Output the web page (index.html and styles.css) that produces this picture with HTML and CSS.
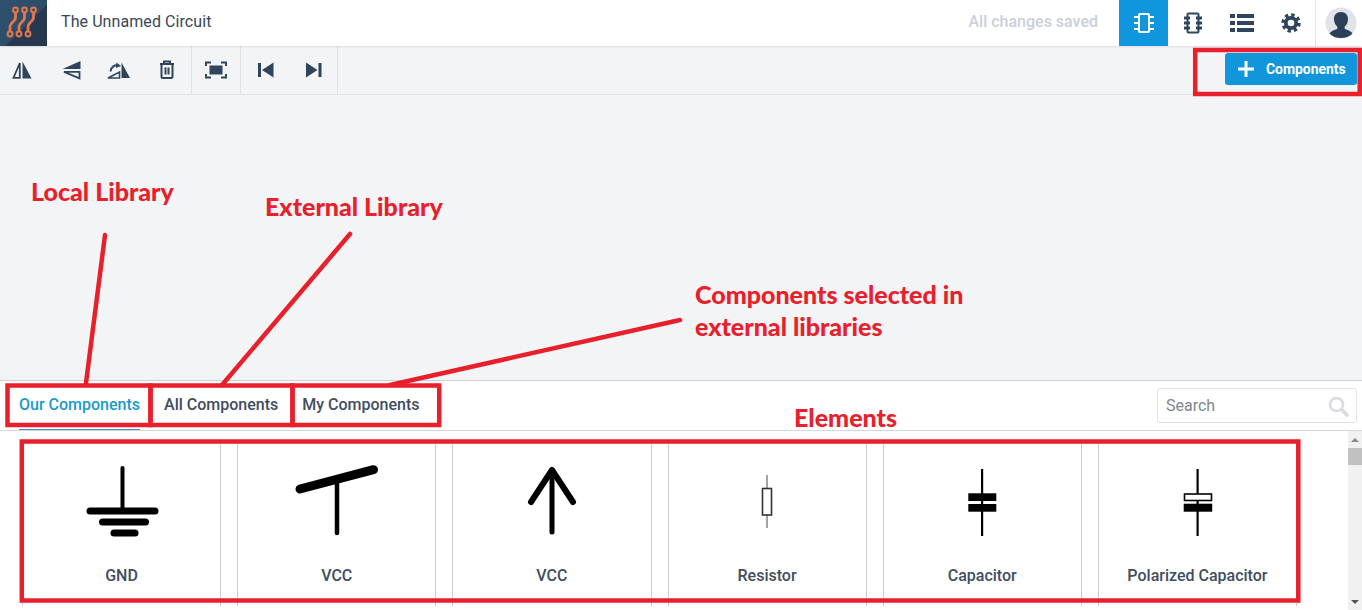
FILE: index.html
```html
<!DOCTYPE html>
<html lang="en">
<head>
<meta charset="utf-8">
<title>The Unnamed Circuit</title>
<link rel="stylesheet" href="styles.css">
</head>
<body>
<div class="app">
  <header class="topbar">
    <div class="logo">
      <svg width="47" height="46" viewBox="0 0 47 46" fill="none">
        <g class="trace">
          <path d="M15.500 12v5.500q0 1.500-1 2.700l-3.500 4q-1 1.200-1 2.800v4"/><path d="M24.500 12v5.500q0 1.500-1 2.700l-3.500 4q-1 1.200-1 2.800v4"/><path d="M33.500 12v5.500q0 1.500-1 2.700l-3.500 4q-1 1.200-1 2.800v4"/>
          <circle cx="15.500" cy="10" r="2.400"/><circle cx="24.500" cy="10" r="2.400"/><circle cx="33.500" cy="10" r="2.400"/>
          <circle cx="10" cy="34" r="2.400"/><circle cx="19" cy="34" r="2.400"/><circle cx="28" cy="34" r="2.400"/>
        </g>
      </svg>
    </div>
    <div class="title">The Unnamed Circuit</div>
    <div class="saved">All changes saved</div>
    <div class="tile active">
      <svg width="22" height="24" viewBox="0 0 22 24" fill="none" stroke="#fff" stroke-width="2">
        <rect x="6" y="3" width="10" height="18" rx="1"/>
        <path d="M1 6h5M1 12h5M1 18h5M16 6h5M16 12h5M16 18h5"/>
      </svg>
    </div>
    <div class="tile">
      <svg width="22" height="24" viewBox="0 0 22 24" fill="none" stroke="#2f455c" stroke-width="2">
        <rect x="5.500" y="2.500" width="11" height="19" rx="1"/>
        <path d="M2 7h6M2 12h6M2 17h6M14 7h6M14 12h6M14 17h6" stroke-width="3"/>
      </svg>
    </div>
    <div class="tile">
      <svg width="24" height="20" viewBox="0 0 24 20" fill="#2f455c">
        <rect x="0" y="1" width="5" height="4"/><rect x="7" y="1" width="17" height="4"/>
        <rect x="0" y="8" width="5" height="4"/><rect x="7" y="8" width="17" height="4"/>
        <rect x="0" y="15" width="5" height="4"/><rect x="7" y="15" width="17" height="4"/>
      </svg>
    </div>
    <div class="tile">
      <svg width="20" height="20" viewBox="0 0 20 20" fill="none" stroke="#2f455c">
        <circle cx="10" cy="10" r="5.200" stroke-width="3.800"/>
        <circle cx="10" cy="10" r="8" stroke-width="3.400" stroke-dasharray="3.300 2.980"/>
      </svg>
    </div>
    <div class="account">
      <svg width="32" height="32" viewBox="0 0 32 32">
        <circle cx="16" cy="16" r="15.500" fill="#e1e3e8"/>
        <path d="M16 5c-4.500 0-7 3-7 7 0 3.200 1.300 6 3.300 7.500v2.500c-3 1.200-6.500 2-7.800 4.500 2.800 3 6.900 4.500 11.500 4.500s8.700-1.500 11.500-4.500c-1.300-2.500-4.800-3.300-7.800-4.500v-2.500c2-1.500 3.300-4.300 3.300-7.500 0-4-2.500-7-7-7z" fill="#2b3f59"/>
      </svg>
    </div>
  </header>

  <div class="toolbar">
    <div class="tool-group group-edit">
      <button class="tool">
        <svg width="24" height="24" viewBox="0 0 24 24" fill="#2f455c"><path d="M1.500 19.800 7.800 5v14.800z" fill="none" stroke="#2f455c" stroke-width="1.800"/><path d="M10.500 3.500 19.500 20.500h-9z"/></svg>
      </button>
      <button class="tool">
        <svg width="24" height="24" viewBox="0 0 24 24" fill="#2f455c"><path d="M2.500 11 20.500 3v8z"/><path d="M4 13.800H19.500v6.500z" fill="none" stroke="#2f455c" stroke-width="1.800"/></svg>
      </button>
      <button class="tool">
        <svg width="24" height="24" viewBox="0 0 24 24" fill="#2f455c"><path d="M14.500 4.500 23 20h-8.500z"/><path d="M1 20h11.500v-6z" fill="none" stroke="#2f455c" stroke-width="1.600"/><path d="M3.500 13.500C4 9 8 6.500 11.500 7.500" fill="none" stroke="#2f455c" stroke-width="2"/><path d="M9.500 4.500 14 8l-5 2z"/></svg>
      </button>
      <button class="tool">
        <svg width="24" height="24" viewBox="0 0 24 24" fill="none" stroke="#2f455c" stroke-width="2"><path d="M5 6h14M9 6V3.500h6V6"/><rect x="6.500" y="6" width="11" height="14" rx="1"/><path d="M10.500 9.500v7M13.500 9.500v7"/></svg>
      </button>
    </div>
    <div class="tool-group group-view">
      <button class="tool">
        <svg width="24" height="24" viewBox="0 0 24 24" fill="none" stroke="#2f455c" stroke-width="2"><path d="M2 8V4.500h5M17 4.500h5V8M22 16v3.500h-5M7 19.500H2V16"/><rect x="5.500" y="7.500" width="13" height="9" fill="#2f455c" stroke="none"/></svg>
      </button>
    </div>
    <div class="tool-group group-step">
      <button class="tool">
        <svg width="24" height="24" viewBox="0 0 24 24" fill="#2f455c"><rect x="5" y="5" width="3" height="14"/><path d="M20.500 4.500V19.500L9 12z"/></svg>
      </button>
      <button class="tool">
        <svg width="24" height="24" viewBox="0 0 24 24" fill="#2f455c"><rect x="17.500" y="5" width="3" height="14"/><path d="M5 4.500V19.500L16.500 12z"/></svg>
      </button>
    </div>
    <div class="toolbar-spacer"></div>
    <button class="add-btn">
      <svg width="16" height="16" viewBox="0 0 16 16" fill="#fff"><rect x="6.500" y="0" width="3" height="16"/><rect x="0" y="6.500" width="16" height="3"/></svg>
      <span>Components</span>
    </button>
  </div>

  <main class="canvas"></main>

  <section class="panel">
    <div class="tabs-row">
      <div class="tab is-current">Our Components</div>
      <div class="tab">All Components</div>
      <div class="tab">My Components</div>
      <div class="search">
        <span>Search</span>
        <svg width="22" height="22" viewBox="0 0 22 22" fill="none" stroke="#d8dbdf"><circle cx="9.500" cy="9.500" r="6.500" stroke-width="2.600"/><path d="M14.500 14.500 20 20" stroke-width="3.600" stroke-linecap="round"/></svg>
      </div>
    </div>
    <div class="library">
      <div class="grid">
        <div class="card">
          <svg class="symbol" width="100" height="80" viewBox="0 0 100 80" fill="none" stroke="#000" stroke-linecap="round">
            <path d="M50.500 8v43" stroke-width="4"/><path d="M18 51h65" stroke-width="7"/><path d="M30.500 62h43" stroke-width="7"/><path d="M42 73h21" stroke-width="7"/>
          </svg>
          <div class="label">GND</div>
        </div>
        <div class="card">
          <svg class="symbol" width="100" height="80" viewBox="0 0 100 80" fill="none" stroke="#000" stroke-linecap="round">
            <path d="M13 29 86.500 9.700" stroke-width="9"/><path d="M50 20v53" stroke-width="4.500"/>
          </svg>
          <div class="label">VCC</div>
        </div>
        <div class="card">
          <svg class="symbol" width="100" height="80" viewBox="0 0 100 80" fill="none" stroke="#000" stroke-linecap="round" stroke-linejoin="round">
            <path d="M29 42 50 10l21 32" stroke-width="6"/><path d="M50 10v62" stroke-width="5"/>
          </svg>
          <div class="label">VCC</div>
        </div>
        <div class="card">
          <svg class="symbol" width="100" height="80" viewBox="0 0 100 80" fill="none" stroke="#333">
            <path d="M50 15v13M50 55v13" stroke="#666" stroke-width="1.200"/><rect x="45.500" y="28.500" width="9" height="26.500" stroke-width="1.600"/>
          </svg>
          <div class="label">Resistor</div>
        </div>
        <div class="card">
          <svg class="symbol" width="100" height="80" viewBox="0 0 100 80" fill="#000">
            <rect x="49" y="9" width="2.200" height="67"/><rect x="36.300" y="33.300" width="28" height="7.700"/><rect x="36.300" y="44" width="28" height="7.700"/>
          </svg>
          <div class="label">Capacitor</div>
        </div>
        <div class="card">
          <svg class="symbol" width="100" height="80" viewBox="0 0 100 80" fill="#000">
            <rect x="49.500" y="9" width="2.200" height="67"/><rect x="37.500" y="34" width="27" height="6.500" fill="#fff" stroke="#000" stroke-width="1.600"/><rect x="36.700" y="43.700" width="28.500" height="8"/>
          </svg>
          <div class="label">Polarized Capacitor</div>
        </div>
      </div>
      <div class="scrollbar">
        <svg class="arrow" width="14" height="8" viewBox="0 0 14 8" fill="#888"><path d="M7 2 11 6H3z"/></svg>
        <div class="thumb"></div>
        <div class="track"></div>
        <svg class="arrow" width="14" height="8" viewBox="0 0 14 8" fill="#555"><path d="M3 2h8L7 6z"/></svg>
      </div>
    </div>
  </section>
</div>

<svg class="markup" width="1362" height="610" viewBox="0 0 1362 610" fill="none" stroke="#e8202c">
  <g stroke-width="4.500">
    <rect x="1195.200" y="50" width="164.500" height="44"/>
    <rect x="7.500" y="385.500" width="143" height="39.500"/>
    <rect x="150.500" y="385.500" width="142" height="39.500"/>
    <rect x="292.500" y="385.500" width="146.700" height="39.500"/>
    <rect x="21.800" y="441.500" width="1276.500" height="159"/>
  </g>
  <g stroke-width="4.500" stroke-linecap="round">
    <path d="M105 235 86 383"/>
    <path d="M350 234 222 385"/>
    <path d="M680 320 390 385"/>
  </g>
</svg>
<div class="note note-local">Local Library</div>
<div class="note note-external">External Library</div>
<div class="note note-selected">Components selected in<br>external libraries</div>
<div class="note note-elements">Elements</div>
</body>
</html>
```

FILE: styles.css
```css
* { box-sizing: border-box; }
html, body { margin: 0; height: 610px; overflow: hidden; }
body { font-family: Roboto, "Liberation Sans", sans-serif; color: #3a4658; background: #fff; position: relative; }
.app { display: flex; flex-direction: column; height: 610px; }

.topbar { display: flex; align-items: stretch; height: 46px; flex: none; background: #fff; box-shadow: 0 1px 2px rgba(0,0,0,.1); position: relative; }
.logo { width: 47px; background: linear-gradient(135deg, #30526f 0%, #2c4c6a 55%, #26394f 55%, #28394d 100%); flex: none; }
.trace path { stroke: #e8764a; stroke-width: 2.800; }
.trace circle { stroke: #e8764a; stroke-width: 2; }
.title { margin-left: 14px; font-size: 16px; letter-spacing: .08px; line-height: 44px; flex: 1; color: #3a4658; }
.saved { font-size: 16px; font-weight: 500; color: #c9d0da; line-height: 44px; margin-right: 21px; }
.tile { width: 49px; display: flex; align-items: center; justify-content: center; flex: none; }
.tile.active { background: #0f96dc; }
.account { width: 47px; border-left: 1px solid #e1e3e8; display: flex; align-items: center; justify-content: center; flex: none; padding-left: 3px; }

.toolbar { display: flex; height: 49px; flex: none; background: #f3f4f6; border-bottom: 1px solid #dfe1e6; }
.tool-group { display: flex; border-right: 1px solid #dfe1e6; flex: none; }
.group-edit { width: 192px; }
.group-view { width: 49px; }
.group-step { width: 97px; }
.tool { flex: 1; min-width: 0; padding: 0; border: 0; background: none; display: flex; align-items: center; justify-content: center; }
.toolbar-spacer { flex: 1; }
.add-btn { width: 132px; height: 32px; margin: 7px 5px 0 0; padding: 0 0 0 13px; border: 0; border-radius: 3px; background: #1296db; color: #fff; display: flex; align-items: center; gap: 12px; font-family: Roboto, sans-serif; font-size: 14px; font-weight: 700; letter-spacing: -.05px; }

.canvas { flex: 1; background: #f3f4f6; border-bottom: 1px solid #cfd1d6; }

.panel { flex: none; height: 229px; background: #fff; display: flex; flex-direction: column; }
.tabs-row { height: 50px; flex: none; display: flex; border-bottom: 1px solid #d5d7db; padding-left: 19px; }
.tab { font-size: 16px; font-weight: 500; line-height: 47px; color: #414d5e; height: 49px; margin-right: 24px; }
.tab.is-current { color: #1a9bc9; border-bottom: 1px solid #3b8fc4; }
.search { margin: 7px 5px 0 auto; width: 200px; height: 35px; border: 1px solid #e0e2e5; border-radius: 3px; display: flex; align-items: center; justify-content: space-between; padding: 0 7px 0 8px; font-size: 16px; color: #80868d; }

.library { flex: 1; display: flex; min-height: 0; }
.grid { flex: 1; display: grid; grid-template-columns: repeat(6, 1fr); gap: 16px; padding: 9px 51px 4px 22px; height: 179px; }
.card { border-left: 1px solid #cccccc; border-right: 1px solid #cccccc; display: flex; flex-direction: column; align-items: center; min-width: 0; }
.symbol { margin-top: 20px; flex: none; display: block; }
.label { margin-top: 27px; font-size: 16px; font-weight: 500; color: #414d5e; line-height: 18px; white-space: nowrap; }

.scrollbar { width: 14px; flex: none; background: #f1f1f1; display: flex; flex-direction: column; }
.arrow { flex: none; display: block; margin: 5px 0 4px; }
.thumb { height: 17px; flex: none; background: #c1c1c1; }
.track { flex: 1; }

.markup { position: absolute; left: 0; top: 0; pointer-events: none; }
.note { position: absolute; font-family: Lato, sans-serif; font-weight: 900; font-size: 25px; color: #e8202c; line-height: 32px; white-space: nowrap; }
.note-local { left: 31px; top: 175px; }
.note-external { left: 265px; top: 190px; }
.note-selected { left: 695px; top: 278px; }
.note-elements { left: 794px; top: 401px; }
```
